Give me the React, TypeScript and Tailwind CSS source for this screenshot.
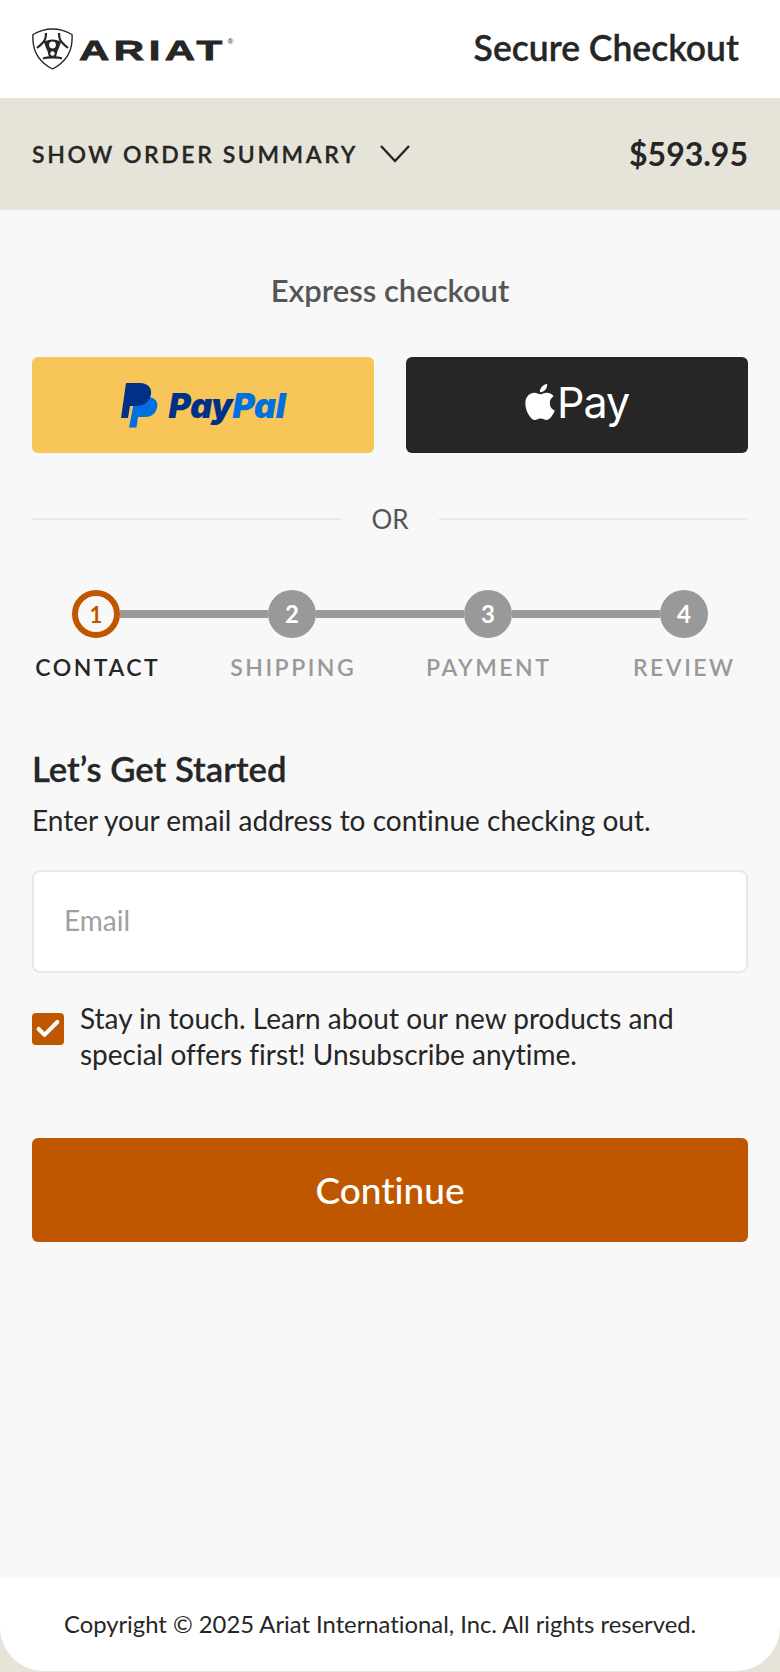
import React from "react";
import { Check } from "lucide-react";

const font = { fontFamily: '"Lato", "Open Sans", sans-serif' };

function Shield() {
  return (
    <svg width="42" height="42" viewBox="0 0 42 42" fill="none" className="shrink-0">
      <path d="M1 6.5C7 3 14 1 20.5 1C27 1 34 3 40 6.5C41 20 36 33 20.5 41C5 33 0 20 1 6.5Z" stroke="#262626" strokeWidth="1.4" fill="#fff" />
      <path d="M14 5C14 10 14 13 5 20M27 5C27 10 27 13 36 20" stroke="#262626" strokeWidth="2.2" />
      <path d="M12 14C16 10.5 25 10.5 29 14L27 20C25 23 25 26 24 29H17C16 26 16 23 14 20Z" fill="#262626" />
      <circle cx="20.5" cy="17" r="3.4" fill="#fff" />
      <circle cx="20.5" cy="25.5" r="2.2" fill="#fff" />
      <path d="M11 30.5C15 29 26 29 30 30.5" stroke="#262626" strokeWidth="2.2" />
    </svg>
  );
}

function PayPalMark() {
  return (
    <svg width="37" height="45" viewBox="0 0 37 45" className="shrink-0">
      <path d="M14 14H27C34 14 37.5 19 36 25C34.5 31 30 34 24 34H17L15.5 44.5H8Z" fill="#0070e0" />
      <path d="M5 0H19C27 0 31 5 30 11C29 18 23 23 16 23H9L7 35H0Z" fill="#003087" />
    </svg>
  );
}

function ApplePath() {
  return (
    <svg width="30" height="36" viewBox="0 0 814 1000" className="shrink-0 mb-[6px]">
      <path fill="#fff" d="M788.1 340.9c-5.8 4.5-108.2 62.2-108.2 190.5 0 148.4 130.3 200.9 134.2 202.2-.6 3.2-20.7 71.9-68.7 141.9-42.8 61.6-87.5 123.1-155.5 123.1s-85.5-39.5-164-39.5c-76.5 0-103.7 40.8-165.9 40.8s-105.6-57-155.5-127C46.7 790.7 0 663 0 541.8c0-194.4 126.4-297.5 250.8-297.5 66.1 0 121.2 43.4 162.7 43.4 39.5 0 101.1-46 176.3-46 28.5 0 130.9 2.6 198.3 99.2zm-234-181.5c31.1-36.9 53.1-88.1 53.1-139.3 0-7.1-.6-14.3-1.9-20.1-50.6 1.9-110.8 33.7-147.1 75.8-28.5 32.4-55.1 83.6-55.1 135.5 0 7.8 1.3 15.6 1.9 18.1 3.2.6 8.4 1.3 13.6 1.3 45.4 0 102.5-30.4 135.5-71.3z" />
    </svg>
  );
}

function Step({ n, active }: { n: number; active?: boolean }) {
  return active ? (
    <div className="w-12 h-12 rounded-full border-[6px] border-[#bf5700] flex items-center justify-center text-[22px] font-bold text-[#bf5700] bg-[#f8f8f8] shrink-0">
      {n}
    </div>
  ) : (
    <div className="w-12 h-12 rounded-full bg-[#999999] flex items-center justify-center text-[24px] font-bold text-white shrink-0">
      {n}
    </div>
  );
}

function Connector() {
  return <div className="flex-1 h-2 bg-[#999999]" />;
}

export default function App() {
  return (
    <div style={font} className="w-[780px] h-[1672px] flex flex-col bg-[#e6e4d9] text-[#262626] overflow-hidden [font-variant-ligatures:none]">
      <header className="h-[98px] bg-white flex items-center justify-between pl-8 pr-[41px] shrink-0">
        <div className="flex items-center">
          <Shield />
          <span className="inline-block ml-[5px] mt-[4px] text-[28px] leading-none font-bold tracking-[3px] origin-left scale-x-[1.5] whitespace-nowrap [-webkit-text-stroke:0.8px_#262626]" style={{ fontFamily: '"Liberation Sans", sans-serif' }}>
            ARIAT
          </span>
          <span className="ml-[50px] -mt-[14px] text-[8px] leading-none" style={{ fontFamily: '"Liberation Sans", sans-serif' }}>®</span>
        </div>
        <div className="mb-[2px] text-[35.5px] font-semibold leading-none whitespace-nowrap [-webkit-text-stroke:0.3px_#262626]">Secure Checkout</div>
      </header>

      <div className="h-[112px] bg-[#e6e4d9] flex items-center justify-between px-8 shrink-0">
        <div className="flex items-center">
          <span className="text-[23px] font-semibold tracking-[2.6px] leading-none [-webkit-text-stroke:0.3px_#262626]">SHOW ORDER SUMMARY</span>
          <svg width="32" height="20" viewBox="0 0 32 20" fill="none" className="ml-[21px]">
            <path d="M2 2L16 17L30 2" stroke="#262626" strokeWidth="2.4" />
          </svg>
        </div>
        <div className="text-[32px] font-bold leading-none">$593.95</div>
      </div>

      <main className="flex-1 bg-[#f8f8f8] px-8 flex flex-col">
        <div className="mt-[62px] text-center text-[31px] font-semibold text-[#555555] leading-9">Express checkout</div>
        <div className="mt-[49px] grid grid-cols-2 gap-8">
          <div className="h-24 rounded-md bg-[#f7c558] flex items-center justify-center">
            <PayPalMark />
            <span className="ml-[11px] mt-[2px] text-[34px] font-black italic leading-none tracking-[-0.3px]" style={{ fontFamily: '"Inter", sans-serif' }}>
              <span className="text-[#003087]">Pay</span>
              <span className="text-[#0070e0]">Pal</span>
            </span>
          </div>
          <div className="h-24 rounded-md bg-[#262626] flex items-center justify-center">
            <ApplePath />
            <span className="ml-[2px] mb-[5px] text-[43px] text-white leading-none tracking-[-1px]" style={{ fontFamily: '"Inter", sans-serif', fontWeight: 400 }}>Pay</span>
          </div>
        </div>

        <div className="mt-[48px] flex items-center gap-[30px] h-9">
          <div className="flex-1 h-[2px] bg-[#eaeae4]" />
          <span className="text-[26px] text-[#555555] leading-none">OR</span>
          <div className="flex-1 h-[2px] bg-[#eaeae4]" />
        </div>

        <div className="mt-[53px] flex items-center px-10">
          <Step n={1} active />
          <Connector />
          <Step n={2} />
          <Connector />
          <Step n={3} />
          <Connector />
          <Step n={4} />
        </div>
        <div className="mt-[15px] -mx-[34px] pl-[2px] grid grid-cols-4 text-center text-[23px] font-semibold tracking-[2.5px] leading-7 text-[#999999]">
          <span className="text-[#262626]">CONTACT</span>
          <span>SHIPPING</span>
          <span>PAYMENT</span>
          <span>REVIEW</span>
        </div>

        <h1 className="mt-[68px] text-[34.7px] font-semibold leading-10 [-webkit-text-stroke:0.3px_#262626]">Let’s Get Started</h1>
        <p className="mt-[13px] text-[28px] leading-9">Enter your email address to continue checking out.</p>

        <div className="mt-[32px] h-[103px] rounded-lg border-2 border-[#e8e8e8] bg-white flex items-center px-[30px] pb-[3px] text-[28px] text-[#a0a0a0]">
          Email
        </div>

        <div className="mt-[27px] flex items-start">
          <div className="mt-[13px] w-8 h-8 rounded bg-[#bf5700] flex items-center justify-center shrink-0">
            <Check size={28} color="#fff" strokeWidth={3.5} />
          </div>
          <p className="ml-4 text-[28px] leading-9">
            Stay in touch. Learn about our new products and
            <br />
            special offers first! Unsubscribe anytime.
          </p>
        </div>

        <div className="mt-[66px] h-[104px] rounded-md bg-[#bf5700] flex items-center justify-center text-white text-[37px] font-medium">
          Continue
        </div>
      </main>

      <footer className="h-[93px] mb-px pl-16 bg-white rounded-b-[44px] flex items-center text-[23.8px] shrink-0">
        Copyright © 2025 Ariat International, Inc. All rights reserved.
      </footer>
    </div>
  );
}
